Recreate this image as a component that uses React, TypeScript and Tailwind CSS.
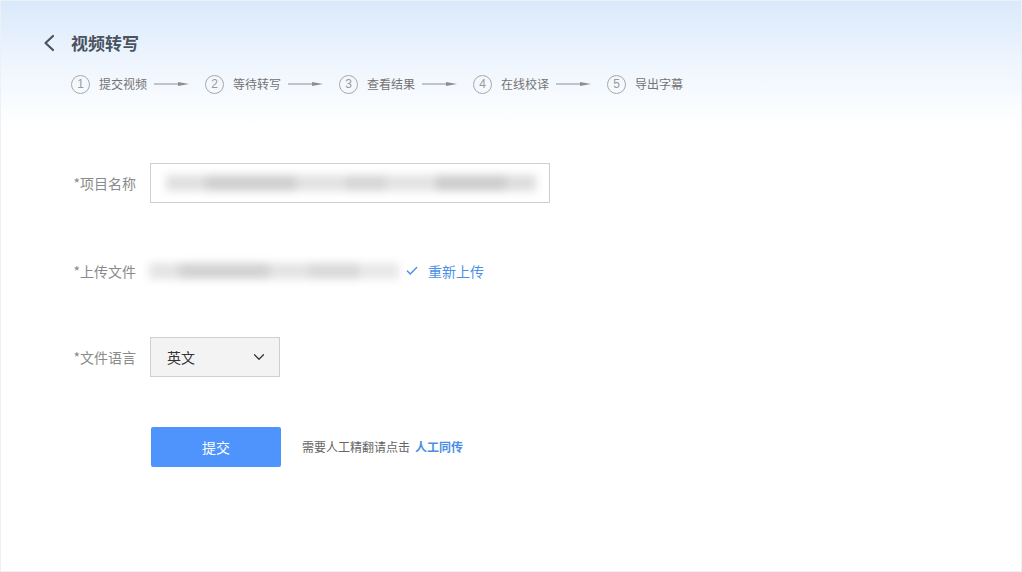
import React from 'react';
import { Check, ChevronDown } from 'lucide-react';

const steps = ['提交视频', '等待转写', '查看结果', '在线校译', '导出字幕'];

const fontStack = "font-['Microsoft_YaHei','Noto_Sans_CJK_SC','Noto_Sans',sans-serif]";

// blurred placeholder for the hidden file / project name
const Blurred: React.FC<{ segments: [number, string][] }> = ({ segments }) => (
  <div className="flex items-center h-[20px] blur-[4px]">
    {segments.map(([w, c], i) => (
      <div key={i} className={`h-[16px] ${c}`} style={{ width: w }} />
    ))}
  </div>
);

const StepArrow = () => (
  <svg width="36" height="8" viewBox="0 0 36 8" className="shrink-0">
    <line x1="0" y1="4" x2="30" y2="4" stroke="#8e8e8e" strokeWidth="1" />
    <path d="M24 2 L35 4 L24 6 Z" fill="#8e8e8e" />
  </svg>
);

const App: React.FC = () => {
  return (
    <div
      className={`w-[1022px] h-[572px] box-border border border-[#edf0f4] bg-[linear-gradient(180deg,#dae9fb_0px,#eef5fe_60px,#ffffff_125px)] ${fontStack}`}
    >
      {/* Header */}
      <div className="flex items-center pl-[40px] pt-[29px] h-[55px]">
        <svg width="18" height="20" viewBox="0 0 18 20" className="shrink-0">
          <path d="M12 3 L4.5 10 L12 17" fill="none" stroke="#4a5360" strokeWidth="2.2" strokeLinecap="round" strokeLinejoin="round" />
        </svg>
        <h1 className="ml-[12px] text-[17px] font-bold text-[#4a5360] leading-[24px]">视频转写</h1>
      </div>

      {/* Steps */}
      <div className="flex items-center pl-[70px] mt-[18px] h-[20px]">
        {steps.map((s, i) => (
          <div key={s} className="flex items-center">
            <div className="w-[19px] h-[19px] rounded-full border border-[#a8a8a8] flex items-center justify-center text-[12px] leading-none text-[#9a9a9a] font-['Liberation_Sans',sans-serif]">
              {i + 1}
            </div>
            <span className="ml-[9px] text-[12px] text-[#737373] leading-[20px]">{s}</span>
            {i < steps.length - 1 && (
              <div className="ml-[7px] mr-[15px]">
                <StepArrow />
              </div>
            )}
          </div>
        ))}
      </div>

      {/* Form */}
      <div className="pl-[60px] mt-[69px]">
        <div className="flex items-center h-[40px]">
          <label className="w-[75px] text-right text-[14px] text-[#8a8a8a]">*项目名称</label>
          <div className="ml-[14px] w-[400px] h-[40px] border border-[#cfcfcf] bg-white flex items-center pl-[15px]">
            <Blurred
              segments={[
                [40, 'bg-[#e0e0e0]'],
                [90, 'bg-[#cfcfcf]'],
                [50, 'bg-[#e2e2e2]'],
                [40, 'bg-[#d6d6d6]'],
                [50, 'bg-[#e3e3e3]'],
                [70, 'bg-[#cdcdcd]'],
                [30, 'bg-[#dddddd]'],
              ]}
            />
          </div>
        </div>

        <div className="flex items-center h-[40px] mt-[48px]">
          <label className="w-[75px] text-right text-[14px] text-[#8a8a8a]">*上传文件</label>
          <div className="ml-[13px]">
            <Blurred
              segments={[
                [30, 'bg-[#e4e4e4]'],
                [90, 'bg-[#d2d2d2]'],
                [40, 'bg-[#e3e3e3]'],
                [50, 'bg-[#d9d9d9]'],
                [40, 'bg-[#e8e8e8]'],
              ]}
            />
          </div>
          <Check className="ml-[6px] w-[14px] h-[14px] text-[#4a8fe7]" strokeWidth={2.4} />
          <a className="ml-[9px] text-[14px] text-[#4a8fe7] cursor-pointer">重新上传</a>
        </div>

        <div className="flex items-center h-[40px] mt-[46px]">
          <label className="w-[75px] text-right text-[14px] text-[#8a8a8a]">*文件语言</label>
          <div className="ml-[14px] w-[130px] h-[40px] border border-[#cfcfcf] bg-[#f3f3f3] flex items-center justify-between pl-[16px] pr-[11px]">
            <span className="text-[14px] text-[#333]">英文</span>
            <ChevronDown className="w-[18px] h-[18px] text-[#333]" strokeWidth={1.6} />
          </div>
        </div>

        <div className="flex items-center h-[40px] mt-[50px]">
          <div className="w-[75px]" />
          <button className="ml-[15px] w-[130px] h-[40px] rounded-[2px] bg-[#4e94fc] text-white text-[14px]">提交</button>
          <span className="ml-[21px] text-[12px] text-[#666]">需要人工精翻请点击</span>
          <a className="ml-[5px] text-[12px] font-bold text-[#4a8fe7] cursor-pointer">人工同传</a>
        </div>
      </div>
    </div>
  );
};

export default App;
